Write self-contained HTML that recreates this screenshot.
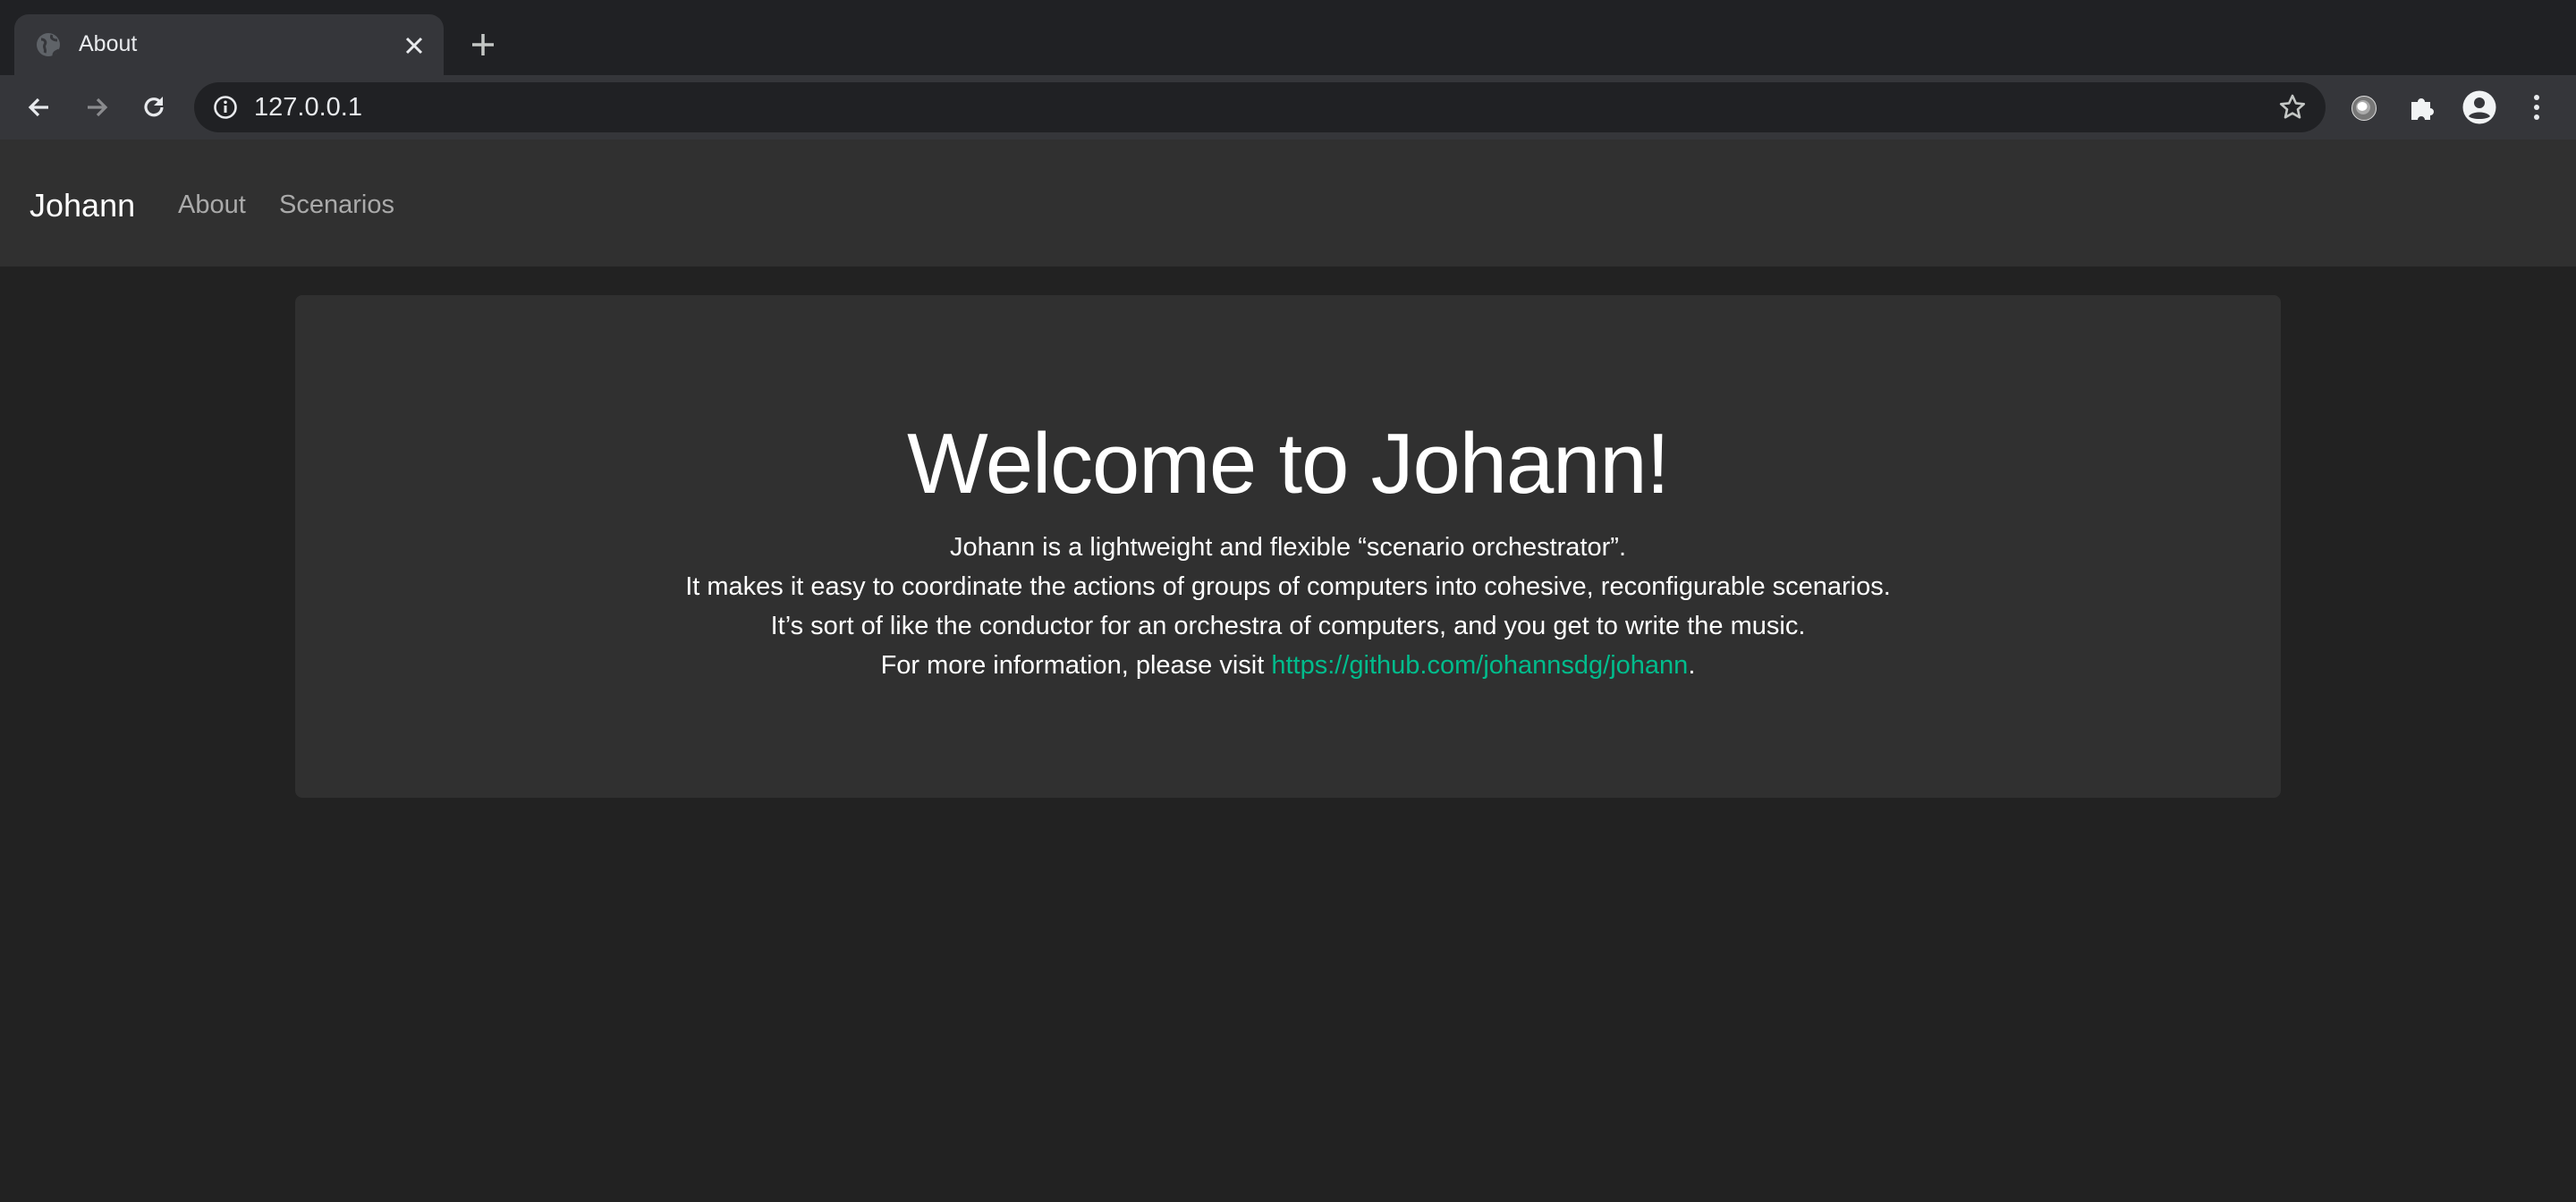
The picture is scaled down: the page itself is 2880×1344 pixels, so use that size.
<!DOCTYPE html>
<html><head><meta charset="utf-8"><style>
*{margin:0;padding:0;box-sizing:border-box}
body{width:2880px;height:1344px;background:#222;font-family:"Liberation Sans",sans-serif;overflow:hidden;position:relative;color:#fff}
.tabbar{position:absolute;left:0;top:0;width:2880px;height:84px;background:#202124}
.tab{position:absolute;left:16px;top:16px;width:480px;height:68px;background:#35363a;border-radius:16px 16px 0 0}
.toolbar{position:absolute;left:0;top:84px;width:2880px;height:72px;background:#35363a}
.url{position:absolute;left:217px;top:92px;width:2383px;height:56px;background:#202124;border-radius:28px}
.nav{position:absolute;left:0;top:156px;width:2880px;height:142px;background:#303030}
.card{position:absolute;left:330px;top:330px;width:2220px;height:562px;background:#303030;border-radius:8px;text-align:center}
h1{position:absolute;left:0;right:0;top:464px;font-weight:400;font-size:96px;line-height:110px;text-align:center;letter-spacing:-1.2px}
p{position:absolute;left:0;right:0;top:590px;font-size:29px;line-height:44px;text-align:center}
a{color:#00bc8c;text-decoration:none}
</style></head><body>
<div class="tabbar"></div>
<div class="tab"></div>
<svg style="position:absolute;left:40px;top:36px" width="28" height="28" viewBox="0 0 28 28"><circle cx="14" cy="14" r="13" fill="#5f6368"/><path d="M6 8c4 0 6 3 4 6s2 5 0 9M18 3c-2 4 2 6 6 6M20 26c0-4 4-5 6-6" stroke="#35363a" stroke-width="3" fill="none"/></svg>
<div style="position:absolute;left:88px;top:35px;font-size:25px;color:#e8eaed">About</div>
<svg style="position:absolute;left:452px;top:40px" width="22" height="22"><path d="M3 3L19 19M19 3L3 19" stroke="#e8eaed" stroke-width="3"/></svg>
<svg style="position:absolute;left:526px;top:36px" width="28" height="28"><path d="M14 2V26M2 14H26" stroke="#c4c7c5" stroke-width="3.5"/></svg>
<div class="toolbar"></div>
<svg style="position:absolute;left:28px;top:104px" width="32" height="32" viewBox="0 0 32 32"><path d="M26 16H6M15 7L6 16l9 9" stroke="#e8eaed" stroke-width="3.2" fill="none"/></svg>
<svg style="position:absolute;left:92px;top:104px" width="32" height="32" viewBox="0 0 32 32"><path d="M6 16H26M17 7l9 9-9 9" stroke="#8a8b8e" stroke-width="3.2" fill="none"/></svg>
<svg style="position:absolute;left:156px;top:104px" width="32" height="32" viewBox="0 0 32 32"><path d="M25 16a9 9 0 1 1-3-7" stroke="#e8eaed" stroke-width="3.2" fill="none"/><path d="M26 4v10H16z" fill="#e8eaed"/></svg>
<div class="url"></div>
<svg style="position:absolute;left:238px;top:106px" width="28" height="28" viewBox="0 0 28 28"><circle cx="14" cy="14" r="11.5" stroke="#e8eaed" stroke-width="2.6" fill="none"/><path d="M14 12v8" stroke="#e8eaed" stroke-width="3"/><circle cx="14" cy="8.3" r="1.8" fill="#e8eaed"/></svg>
<div style="position:absolute;left:284px;top:104px;font-size:29px;color:#e8eaed">127.0.0.1</div>
<svg style="position:absolute;left:2547px;top:104px" width="32" height="32" viewBox="0 0 32 32"><path d="M16 3l3.8 8.4 9 .9-6.8 6 2 8.9L16 22.6 8 27.2l2-8.9-6.8-6 9-.9z" stroke="#c4c7c5" stroke-width="2.6" fill="none" stroke-linejoin="round"/></svg>
<svg style="position:absolute;left:2628px;top:106px" width="30" height="30" viewBox="0 0 30 30"><circle cx="15" cy="15" r="13.5" fill="#777" stroke="#ddd" stroke-width="1"/><circle cx="14" cy="14" r="8" fill="#aaa"/><ellipse cx="13" cy="13" rx="5.5" ry="5" fill="#fff"/></svg>
<svg style="position:absolute;left:2692px;top:104px" width="32" height="32" viewBox="0 0 32 32"><path d="M4 10h7a4 4 0 1 1 8 0h6v7a4 4 0 1 1 0 8v5H19a4 4 0 1 0-8 0H4z" fill="#f1f3f4"/></svg>
<svg style="position:absolute;left:2753px;top:101px" width="38" height="38" viewBox="0 0 38 38"><circle cx="19" cy="19" r="18.5" fill="#f1f3f4"/><circle cx="19" cy="14" r="6" fill="#35363a"/><path d="M7 29c4-6 20-6 24 0c-4 4-20 4-24 0z" fill="#35363a"/></svg>
<svg style="position:absolute;left:2826px;top:104px" width="20" height="32"><circle cx="10" cy="5" r="3" fill="#e8eaed"/><circle cx="10" cy="16" r="3" fill="#e8eaed"/><circle cx="10" cy="27" r="3" fill="#e8eaed"/></svg>
<div class="nav"></div>
<div style="position:absolute;left:33px;top:209px;font-size:36px;color:#fff">Johann</div>
<div style="position:absolute;left:199px;top:213px;font-size:29px;color:#aaa">About</div>
<div style="position:absolute;left:312px;top:213px;font-size:29px;color:#aaa">Scenarios</div>
<div class="card"></div>
<h1>Welcome to Johann!</h1>
<p>Johann is a lightweight and flexible “scenario orchestrator”.<br>It makes it easy to coordinate the actions of groups of computers into cohesive, reconfigurable scenarios.<br>It’s sort of like the conductor for an orchestra of computers, and you get to write the music.<br>For more information, please visit <a>https://github.com/johannsdg/johann</a>.</p>
</body></html>
